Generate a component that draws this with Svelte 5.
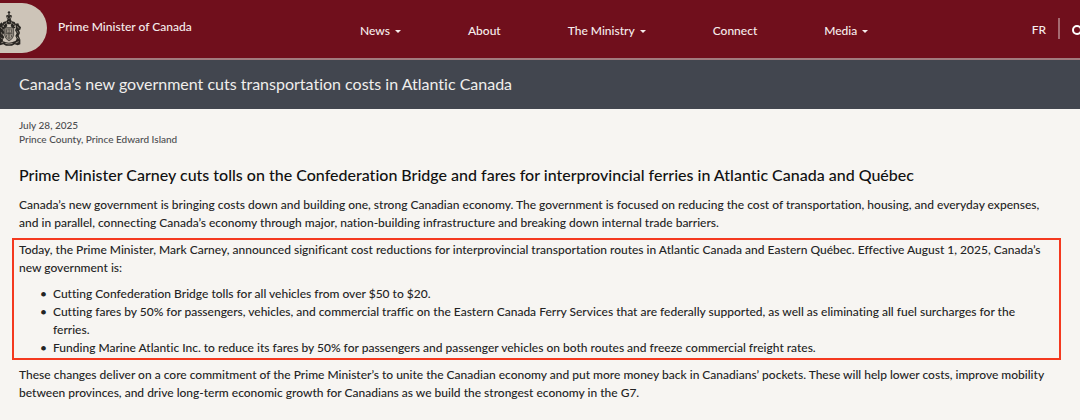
<script>
  const navItems = [
    { label: "News", menu: true },
    { label: "About", menu: false },
    { label: "The Ministry", menu: true },
    { label: "Connect", menu: false },
    { label: "Media", menu: true },
  ];

  const measures = [
    "Cutting Confederation Bridge tolls for all vehicles from over $50 to $20.",
    "Cutting fares by 50% for passengers, vehicles, and commercial traffic on the Eastern Canada Ferry Services that are federally supported, as well as eliminating all fuel surcharges for the ferries.",
    "Funding Marine Atlantic Inc. to reduce its fares by 50% for passengers and passenger vehicles on both routes and freeze commercial freight rates.",
  ];
</script>

<header class="site-header">
  <a class="crest" href="#home" aria-label="Home">
    <svg viewBox="0 0 66 108" width="22" height="36" aria-hidden="true">
      <g fill="#292622">
        <!-- crown -->
        <circle cx="27" cy="4" r="3.5" />
        <path d="M25 7h4v5h-4z M18 14q4-4 9-1q5-3 9 1l-3 9H21z" />
        <!-- crest lion and mantling -->
        <path d="M23 24h9l3 7l-3 9h-10l-3-9z" />
        <path d="M18 31l-8 2l-3 8l5 4l-4 6l8 1l6-7l-2-7z M36 31l8 2l4 8l-6 4l5 6l-9 1l-6-7l2-7z" />
        <!-- supporters -->
        <path d="M0 38l5-4l4 5l-1 8l7 4l-5 5l3 9l-4 7l4 7l-5 7l2 6H0z" />
        <path d="M46 38l9-1l2 6l6 6l-2 7l-4 1l3 9l-4 8l4 9l-2 9h-12l4-9l-4-8l4-8l-5-9l3-7z" />
        <!-- motto and floral base -->
        <path d="M0 86l9 5q18 8 35 0l17-6v15l-8 3l-9-3l-8 4H18l-8-4l-10 3z" />
      </g>
      <path d="M14 50h27v23q-2 11-14 17q-11-6-13-17z" fill="#8d867c" stroke="#292622" stroke-width="2" />
      <path d="M20 55v10M27 53v31M34 55v10M17 67h20M20 72v6M34 72v6" stroke="#38342f" stroke-width="2" fill="none" />
      <g stroke="#c5bbad" stroke-width="2" fill="none">
        <path d="M22 17v4M31 17v4M25 30l4 4M16 37l-4 5M38 37l5 5M2 48l5 7M4 64l3 7M3 80l4 4" />
        <path d="M52 46l4 6M50 60l5 5M51 77l4 6M4 95l6-2M16 97q11 4 22 0M47 96l9-4M24 58v5M31 58v5M23 73v5M31 73v5" />
      </g>
    </svg>
  </a>
  <a class="brand" href="#home">Prime Minister of Canada</a>
  <nav aria-label="Main">
    {#each navItems as item}
      {#if item.menu}
        <button type="button" aria-haspopup="true">
          {item.label}<span class="caret"></span>
        </button>
      {:else}
        <a href="#{item.label.toLowerCase()}">{item.label}</a>
      {/if}
    {/each}
  </nav>
  <div class="tools">
    <a class="language" href="#fr" lang="fr">FR</a>
    <button class="search" type="button" aria-label="Search">
      <svg viewBox="0 0 14 16" width="14" height="16" aria-hidden="true">
        <circle cx="6" cy="7" r="4" fill="none" stroke="#fff" stroke-width="2" />
        <path d="M9 10l4 4" stroke="#fff" stroke-width="2" />
      </svg>
    </button>
  </div>
</header>

<div class="title-bar">
  <h1>Canada’s new government cuts transportation costs in Atlantic Canada</h1>
</div>

<main>
  <div class="meta">
    <time datetime="2025-07-28">July 28, 2025</time>
    <div>Prince County, Prince Edward Island</div>
  </div>

  <h2>Prime Minister Carney cuts tolls on the Confederation Bridge and fares for interprovincial ferries in Atlantic Canada and Québec</h2>

  <p>
    Canada’s new government is bringing costs down and building one, strong Canadian economy. The government is focused on reducing the cost of transportation, housing, and everyday expenses, and in parallel, connecting Canada’s economy through major, nation-building infrastructure and breaking down internal trade barriers.
  </p>

  <section class="highlight">
    <p>
      Today, the Prime Minister, Mark Carney, announced significant cost reductions for interprovincial transportation routes in Atlantic Canada and Eastern Québec. Effective August 1, 2025, Canada’s new government is:
    </p>
    <ul>
      {#each measures as measure}
        <li>{measure}</li>
      {/each}
    </ul>
  </section>

  <p>
    These changes deliver on a core commitment of the Prime Minister’s to unite the Canadian economy and put more money back in Canadians’ pockets. These will help lower costs, improve mobility between provinces, and drive long-term economic growth for Canadians as we build the strongest economy in the G7.
  </p>
</main>

<style>
  :global(body) {
    margin: 0;
    background: #f7f5f2;
    font-family: Lato, "Liberation Sans", sans-serif;
    font-size: 12px;
    font-weight: 500;
    line-height: 18px;
    font-variant-ligatures: no-common-ligatures;
    color: #242424;
  }

  a,
  button {
    color: #f6edec;
    font: inherit;
    font-variant-ligatures: inherit;
    text-decoration: none;
  }

  button {
    padding: 0;
    border: 0;
    background: none;
    cursor: pointer;
  }

  .site-header {
    display: flex;
    align-items: flex-start;
    height: 58px;
    overflow: hidden;
    background: #700f1c;
    border-bottom: 2px solid #a17b7e;
  }

  .crest {
    flex: none;
    box-sizing: border-box;
    width: 47px;
    height: 50px;
    margin-top: 3px;
    padding-top: 8px;
    border-radius: 0 25px 25px 0;
    background: #cdc4b8;
  }

  .crest svg {
    display: block;
  }

  .brand {
    flex: none;
    width: 303px;
    padding: 18px 0 0 11px;
    box-sizing: border-box;
  }

  nav {
    display: flex;
    flex: none;
    gap: 67px;
    margin-left: 10px;
    padding-top: 22px;
  }

  nav button {
    display: flex;
    align-items: center;
    gap: 5px;
  }

  .caret {
    border: 3px solid transparent;
    border-top-color: #f6edec;
    border-bottom: 0;
  }

  .tools {
    display: flex;
    flex: none;
    gap: 11px;
    margin-left: auto;
    margin-right: -5px;
    padding-top: 18px;
  }

  .language {
    padding: 3px 12px 0 0;
    border-right: 2px solid #a66a71;
  }

  .search {
    padding-top: 4px;
  }

  .search svg {
    display: block;
  }

  .title-bar {
    padding: 14px 19px 15px;
    background: #42464f;
  }

  h1,
  h2 {
    margin: 0;
    font-size: 16px;
    line-height: 20px;
    font-weight: 400;
  }

  h1 {
    color: #f0eeec;
  }

  h2 {
    color: #111;
    margin: 19px 0 11px;
    font-weight: 500;
  }

  main {
    padding: 9px 28px 16px 19px;
  }

  .meta {
    font-size: 10px;
    line-height: 14px;
    color: #4c4d50;
  }

  p {
    margin: 0 0 6px;
  }

  .highlight {
    margin: 0 -9px 6px -7px;
    padding: 1px 5px;
    border: 2px solid #f4391f;
  }

  .highlight p {
    margin-bottom: 8px;
  }

  ul {
    margin: 0;
    padding-left: 34px;
    list-style-type: "•\00a0\00a0";
  }
</style>
